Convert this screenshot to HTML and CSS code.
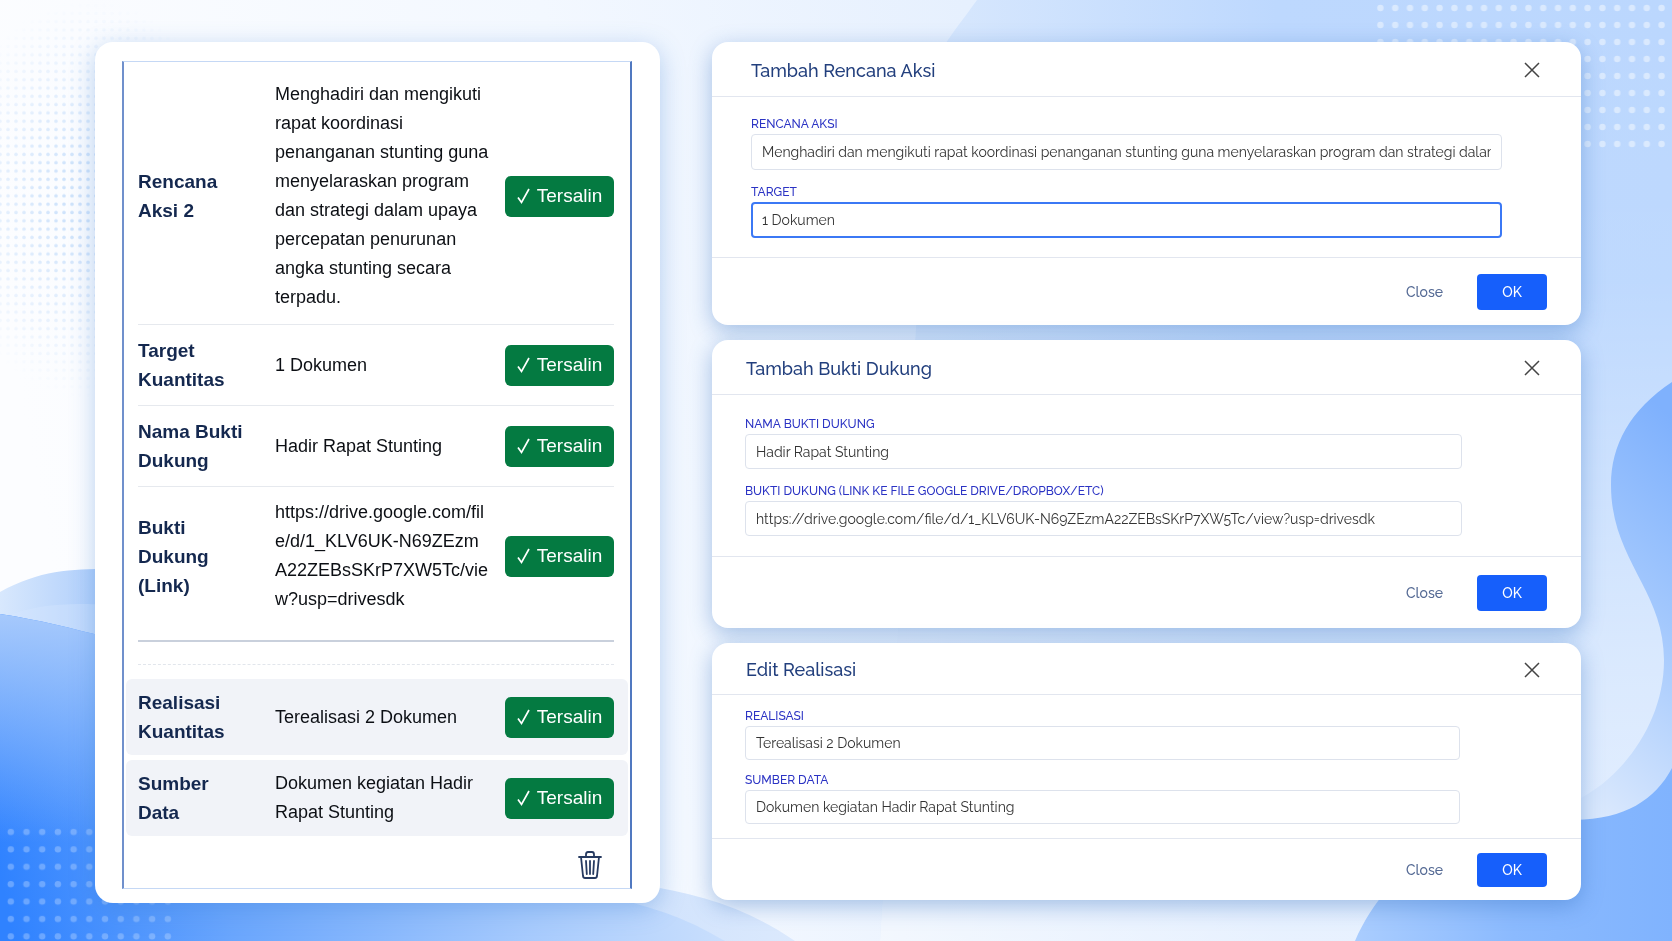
FILE: index.html
```html
<!DOCTYPE html>
<html lang="id">
<head>
  <meta charset="UTF-8">
  <meta name="viewport" content="width=device-width, initial-scale=1.0">
  <title>Rencana Aksi</title>
  <link rel="stylesheet" href="styles.css">
</head>
<body>
  <svg class="backdrop" viewBox="0 0 1672 941" preserveAspectRatio="none" aria-hidden="true">
    <defs>
      <linearGradient id="base" x1="0" y1="0.3" x2="1" y2="0.2">
        <stop offset="0" stop-color="#fcfdff"/>
        <stop offset="0.35" stop-color="#f3f8ff"/>
        <stop offset="0.6" stop-color="#e6f0fe"/>
        <stop offset="1" stop-color="#d8e8fe"/>
      </linearGradient>
      <linearGradient id="sky" x1="0" y1="0" x2="1" y2="0">
        <stop offset="0" stop-color="#dceafd"/>
        <stop offset="0.5" stop-color="#bdd8fe"/>
        <stop offset="1" stop-color="#bbd7fe"/>
      </linearGradient>
      <linearGradient id="skyFade" x1="0" y1="0" x2="0" y2="1">
        <stop offset="0" stop-color="#fff" stop-opacity="0"/>
        <stop offset="0.3" stop-color="#fff" stop-opacity="0.05"/>
        <stop offset="0.7" stop-color="#fff" stop-opacity="0.45"/>
        <stop offset="1" stop-color="#fff" stop-opacity="0.65"/>
      </linearGradient>
      <linearGradient id="wave" x1="0" y1="0.8" x2="1" y2="0.7">
        <stop offset="0" stop-color="#2f82ff"/>
        <stop offset="0.3" stop-color="#6aa6fd"/>
        <stop offset="0.7" stop-color="#a6cafd"/>
        <stop offset="1" stop-color="#cde1fd"/>
      </linearGradient>
      <linearGradient id="waveTop" x1="0" y1="0" x2="0" y2="1">
        <stop offset="0" stop-color="#a6c9fc"/>
        <stop offset="0.7" stop-color="#a6c9fc" stop-opacity="0"/>
      </linearGradient>
      <linearGradient id="waveBack" x1="0" y1="0" x2="1" y2="0">
        <stop offset="0" stop-color="#d8e8fd"/>
        <stop offset="0.13" stop-color="#adcdfb"/>
        <stop offset="1" stop-color="#dbe9fd"/>
      </linearGradient>
      <linearGradient id="blob" x1="0.6" y1="0" x2="0.4" y2="1">
        <stop offset="0" stop-color="#7fb1fd"/>
        <stop offset="0.45" stop-color="#a3c8fd"/>
        <stop offset="1" stop-color="#dbe9fd"/>
      </linearGradient>
      <linearGradient id="corner" x1="0" y1="0" x2="1" y2="0">
        <stop offset="0" stop-color="#aacdfe"/>
        <stop offset="0.5" stop-color="#8bbafe"/>
        <stop offset="1" stop-color="#80b3fe"/>
      </linearGradient>
      <radialGradient id="fade">
        <stop offset="0.2" stop-color="#bbb"/>
        <stop offset="1" stop-color="#000"/>
      </radialGradient>
      <mask id="dotMask"><ellipse cx="90" cy="200" rx="150" ry="200" fill="url(#fade)"/></mask>
      <pattern id="smallDots" width="8" height="8.3" patternUnits="userSpaceOnUse">
        <circle cx="8" cy="5" r="1.800" fill="#bfdafa"/>
        <circle cx="0" cy="5" r="1.800" fill="#bfdafa"/>
      </pattern>
      <pattern id="dotsRight" x="1373" width="14.8" height="17" patternUnits="userSpaceOnUse">
        <circle cx="7.4" cy="8" r="3.2" fill="#fff" fill-opacity="0.45"/>
      </pattern>
      <pattern id="dotsLeft" x="3" y="824" width="15.7" height="17.4" patternUnits="userSpaceOnUse">
        <circle cx="7.8" cy="8" r="3.2" fill="#bcd8ff" fill-opacity="0.4"/>
      </pattern>
    </defs>
    <rect width="1672" height="941" fill="url(#base)"/>
    <path d="M977 0C950 38 935 50 930 90L880 941H1672V0Z" fill="url(#sky)"/>
    <path d="M977 0C950 38 935 50 930 90L880 941H1672V0Z" fill="url(#skyFade)"/>
    <path d="M1672 382C1630 410 1611 445 1611 485C1611 560 1664 590 1664 660C1664 725 1620 780 1575 801V830H1672Z" fill="url(#blob)"/>
    <path d="M1672 768C1655 800 1625 819 1575 820C1490 822 1400 840 1355 941H1672Z" fill="url(#corner)"/>
    <rect width="260" height="400" fill="url(#smallDots)" mask="url(#dotMask)"/>
    <path d="M0 592C40 570 70 569 110 569C300 570 400 860 640 885C700 893 750 910 795 941H0Z" fill="url(#waveBack)"/>
    <path d="M0 618C40 603 70 603 110 605C300 620 500 880 640 905C680 916 700 927 725 941H0Z" fill="#d5e6fe" opacity="0.4"/>
    <path d="M0 614C40 620 70 628 110 638C300 700 480 860 640 905C680 916 700 927 725 941H0Z" fill="url(#wave)"/>
    <path d="M0 614C40 620 70 628 110 638V941H0Z" fill="url(#waveTop)"/>
    <rect x="1373" width="299" height="152" fill="url(#dotsRight)"/>
    <rect x="3" y="824" width="172" height="117" fill="url(#dotsLeft)"/>
  </svg>

  <!-- shared icons -->
  <svg class="sprite" aria-hidden="true">
    <symbol id="check" viewBox="0 0 14 18">
      <path d="M1 10.500l3.500 5L12 2" fill="none" stroke="currentColor" stroke-width="1.700"/>
    </symbol>
    <symbol id="cross" viewBox="0 0 16 16">
      <path d="M1 1l14 14M15 1L1 15" fill="none" stroke="currentColor" stroke-width="1.500"/>
    </symbol>
  </svg>

  <main class="page">
    <section class="panel">
      <div class="sheet">
        <div class="row row-first">
          <strong>Rencana Aksi 2</strong>
          <span>Menghadiri dan mengikuti rapat koordinasi penanganan stunting guna menyelaraskan program dan strategi dalam upaya percepatan penurunan angka stunting secara terpadu.</span>
          <button type="button" class="copy"><svg><use href="#check"/></svg>Tersalin</button>
        </div>
        <div class="row">
          <strong>Target Kuantitas</strong>
          <span>1 Dokumen</span>
          <button type="button" class="copy"><svg><use href="#check"/></svg>Tersalin</button>
        </div>
        <div class="row">
          <strong>Nama Bukti Dukung</strong>
          <span>Hadir Rapat Stunting</span>
          <button type="button" class="copy"><svg><use href="#check"/></svg>Tersalin</button>
        </div>
        <div class="row row-link">
          <strong>Bukti Dukung (Link)</strong>
          <span class="url">https://drive.google.com/file/d/1_KLV6UK-N69ZEzmA22ZEBsSKrP7XW5Tc/view?usp=drivesdk</span>
          <button type="button" class="copy"><svg><use href="#check"/></svg>Tersalin</button>
        </div>
        <div class="divider"></div>
        <div class="row row-shaded">
          <strong>Realisasi Kuantitas</strong>
          <span>Terealisasi 2 Dokumen</span>
          <button type="button" class="copy"><svg><use href="#check"/></svg>Tersalin</button>
        </div>
        <div class="row row-shaded">
          <strong>Sumber Data</strong>
          <span>Dokumen kegiatan Hadir Rapat Stunting</span>
          <button type="button" class="copy"><svg><use href="#check"/></svg>Tersalin</button>
        </div>
        <div class="sheet-footer">
          <button type="button" class="delete" aria-label="Hapus">
            <svg viewBox="0 0 24 28" fill="none" stroke="currentColor" stroke-width="1.800" stroke-linecap="round" stroke-linejoin="round">
              <path d="M1 6h22M3 6l2 19q.3 2 2 2h10q1.700 0 2-2l2-19M8 6V3.500Q8 1 10 1h4q2 0 2 2.500V6"/>
              <path d="M8 10l.8 13M12 10v13M16 10l-.8 13"/>
            </svg>
          </button>
        </div>
      </div>
    </section>

    <div class="modals">
      <section class="modal modal-plan">
        <header>
          <h2>Tambah Rencana Aksi</h2>
          <button type="button" class="dismiss" aria-label="Tutup"><svg><use href="#cross"/></svg></button>
        </header>
        <div class="modal-body">
          <label for="rencana">RENCANA AKSI</label>
          <input type="text" id="rencana" value="Menghadiri dan mengikuti rapat koordinasi penanganan stunting guna menyelaraskan program dan strategi dalam upaya percepatan penurunan angka stunting secara terpadu.">
          <label for="target">TARGET</label>
          <input type="text" id="target" class="active" value="1 Dokumen">
        </div>
        <footer>
          <button type="button" class="close">Close</button>
          <button type="button" class="ok">OK</button>
        </footer>
      </section>

      <section class="modal modal-proof">
        <header>
          <h2>Tambah Bukti Dukung</h2>
          <button type="button" class="dismiss" aria-label="Tutup"><svg><use href="#cross"/></svg></button>
        </header>
        <div class="modal-body">
          <label for="bukti">NAMA BUKTI DUKUNG</label>
          <input type="text" id="bukti" value="Hadir Rapat Stunting">
          <label for="link">BUKTI DUKUNG (LINK KE FILE GOOGLE DRIVE/DROPBOX/ETC)</label>
          <input type="text" id="link" value="https://drive.google.com/file/d/1_KLV6UK-N69ZEzmA22ZEBsSKrP7XW5Tc/view?usp=drivesdk">
        </div>
        <footer>
          <button type="button" class="close">Close</button>
          <button type="button" class="ok">OK</button>
        </footer>
      </section>

      <section class="modal modal-result">
        <header>
          <h2>Edit Realisasi</h2>
          <button type="button" class="dismiss" aria-label="Tutup"><svg><use href="#cross"/></svg></button>
        </header>
        <div class="modal-body">
          <label for="realisasi">REALISASI</label>
          <input type="text" id="realisasi" value="Terealisasi 2 Dokumen">
          <label for="sumber">SUMBER DATA</label>
          <input type="text" id="sumber" value="Dokumen kegiatan Hadir Rapat Stunting">
        </div>
        <footer>
          <button type="button" class="close">Close</button>
          <button type="button" class="ok">OK</button>
        </footer>
      </section>
    </div>
  </main>
</body>
</html>
```
FILE: styles.css
```css
* {
  box-sizing: border-box;
}
body {
  margin: 0;
  font-family: 'Liberation Sans', Arial, sans-serif;
  background: #eef5ff;
  color: #0c0f14;
}
button, input {
  font-family: inherit;
}
button {
  border: none;
  cursor: pointer;
}
.backdrop {
  position: fixed;
  inset: 0;
  width: 100%;
  height: 100%;
  z-index: -1;
}
.sprite {
  display: none;
}
.page {
  display: grid;
  grid-template-columns: 565fr 869fr;
  align-items: start;
  gap: 52px;
  padding: 42px 91px 36px 95px;
}

/* left panel */
.panel {
  padding: 19px 28px 14px 27px;
  background: #fff;
  border-radius: 18px;
  box-shadow: 0 6px 24px rgba(60, 125, 210, 0.35);
}
.sheet {
  padding: 0 2px;
  border: 1px solid #c5d8f5;
  border-left: 2px solid #7090cc;
  border-right: 2px solid #5078c0;
}
.row {
  display: grid;
  grid-template-columns: 125px 1fr 109px;
  column-gap: 12px;
  align-items: center;
  margin: 0 14px 0 12px;
  padding: 11px 0;
  border-bottom: 1px solid #e6e9ee;
  font-size: 18px;
  line-height: 29px;
}
.row strong {
  padding-right: 16px;
  font-size: 19px;
  color: #14284f;
}
.url {
  padding-right: 3px;
  word-break: break-all;
}
.row-first {
  padding: 18px 0 12px;
}
.row-link {
  padding: 11px 0 26px;
  border-bottom: 2px solid #c9d0dc;
}
.divider {
  height: 23px;
  margin: 0 14px 0 12px;
  border-bottom: 1px dashed #e2e6ec;
}
.row-shaded {
  margin: 14px 0 5px;
  padding: 9px 14px 9px 12px;
  border: none;
  border-radius: 6px;
  background: #f1f3f8;
}
.row-shaded + .row-shaded {
  margin-top: 0;
  margin-bottom: 0;
}
.copy {
  display: flex;
  align-items: center;
  justify-content: center;
  gap: 6px;
  height: 41px;
  padding: 0;
  border-radius: 6px;
  background: #047a41;
  color: #fff;
  font-size: 19px;
}
.copy svg {
  width: 14px;
  height: 18px;
}
.sheet-footer {
  display: flex;
  justify-content: flex-end;
  padding: 15px 26px 9px;
}
.delete {
  padding: 0;
  background: none;
  color: #263a60;
}
.delete svg {
  display: block;
  width: 24px;
  height: 28px;
}

/* dialogs */
.modals {
  display: flex;
  flex-direction: column;
  gap: 15px;
  font-family: Raleway, Lato, sans-serif;
}
.modal {
  background: #fff;
  border-radius: 16px;
  box-shadow: 0 6px 22px rgba(50, 110, 190, 0.4);
}
.modal header {
  display: flex;
  align-items: center;
  justify-content: space-between;
  height: 55px;
  padding: 2px 41px 0 34px;
  border-bottom: 1px solid #e2e6ef;
}
.modal h2 {
  margin: 0;
  font-size: 18px;
  font-weight: 500;
  color: #223f7d;
}
.dismiss {
  padding: 0;
  background: none;
  color: #444;
}
.dismiss svg {
  display: block;
  width: 16px;
  height: 16px;
}
.modal-body {
  display: flex;
  flex-direction: column;
  padding: 19px 119px 20px 33px;
}
.modal label {
  font-size: 12px;
  font-weight: 500;
  line-height: 20px;
  color: #2b33c4;
}
.modal input {
  width: 100%;
  height: 35px;
  margin-bottom: 12px;
  padding: 0 10px;
  border: 1px solid #dde2ec;
  border-radius: 4px;
  background: #fff;
  color: #333;
  font-size: 14px;
}
.modal input:last-child {
  margin-bottom: 0;
}
.modal input.active {
  border: 2px solid #3b78f5;
  padding: 0 9px;
}
.modal footer {
  display: flex;
  align-items: center;
  justify-content: flex-end;
  gap: 34px;
  height: 72px;
  padding: 0 34px;
  border-top: 1px solid #e2e6ef;
}
.close {
  padding: 0;
  background: none;
  color: #566b95;
  font-size: 14px;
  font-weight: 500;
}
.ok {
  width: 70px;
  height: 36px;
  border-radius: 4px;
  background: #165ffb;
  color: #fff;
  font-size: 14px;
  font-weight: 500;
}
.modal-plan header {
  padding-left: 39px;
}
.modal-plan .modal-body {
  padding: 17px 79px 19px 39px;
}
.modal-plan input {
  height: 36px;
}
.modal-plan footer {
  height: 68px;
}
.modal-result header {
  height: 52px;
}
.modal-result .modal-body {
  padding: 11px 121px 14px 33px;
}
.modal-result input {
  height: 34px;
  margin-bottom: 10px;
}
.modal-result footer {
  height: 62px;
}
.modal-result .ok {
  height: 34px;
}

@media (max-width: 1100px) {
  .page {
    grid-template-columns: 1fr;
    padding: 24px;
  }
}
```
